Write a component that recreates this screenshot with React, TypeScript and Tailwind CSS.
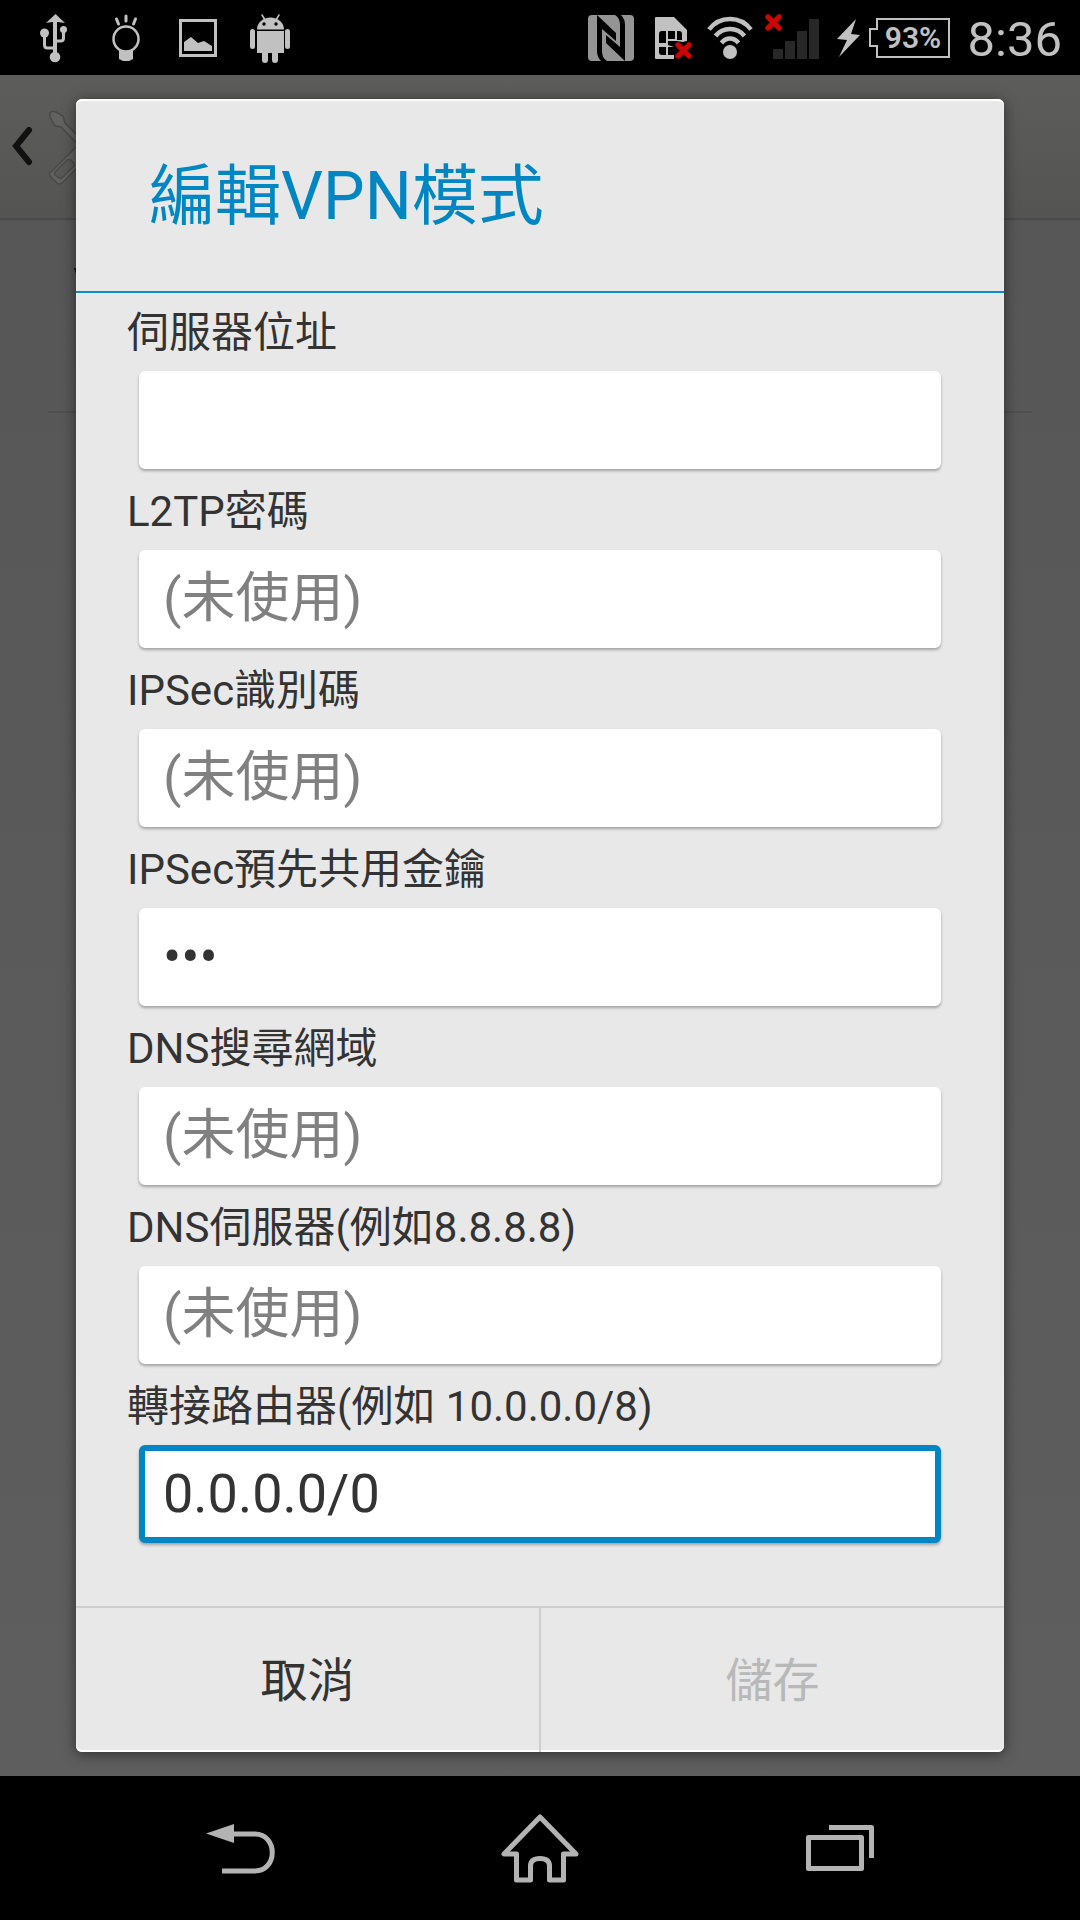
import React, { useState } from 'react';

interface Field {
  id: string;
  label: string;
  type?: 'text' | 'password';
  value: string;
  placeholder?: string;
}

const INITIAL_FIELDS: Field[] = [
  { id: 'server', label: '伺服器位址', value: '' },
  { id: 'l2tp-secret', label: 'L2TP密碼', value: '', placeholder: '(未使用)' },
  { id: 'ipsec-id', label: 'IPSec識別碼', value: '', placeholder: '(未使用)' },
  { id: 'ipsec-key', label: 'IPSec預先共用金鑰', type: 'password', value: 'abc' },
  { id: 'dns-domains', label: 'DNS搜尋網域', value: '', placeholder: '(未使用)' },
  { id: 'dns-servers', label: 'DNS伺服器(例如8.8.8.8)', value: '', placeholder: '(未使用)' },
  { id: 'routes', label: '轉接路由器(例如 10.0.0.0/8)', value: '0.0.0.0/0' },
];

// Small red cross used on the SIM and signal icons
function RedCross({ x, y }: { x: number; y: number }) {
  return (
    <g transform={`translate(${x} ${y})`} strokeLinecap="round">
      <path d="M3 3l11 11M14 3L3 14" stroke="#8e0000" strokeWidth="6" />
      <path d="M3 3l11 11M14 3L3 14" stroke="#cc0505" strokeWidth="4.500" />
    </g>
  );
}

function StatusBar() {
  return (
    <header className="flex h-[75px] shrink-0 items-center justify-between bg-black pr-[18px] pl-10 text-[#c1c1c1]">
      <div className="flex items-center">
        {/* USB */}
        <svg width="28" height="50" viewBox="0 0 28 50" fill="none" stroke="currentColor" strokeWidth="3">
          <path d="M15 6v37" strokeWidth="4" />
          <path d="M4.500 21v11q0 3 3 3H15M23.500 18v7q0 3-3 3H15" />
          <path d="M15.500 1L25 10l-7-1h-6l-6 1z" fill="currentColor" stroke="none" />
          <g fill="currentColor" stroke="none">
            <circle cx="4.500" cy="20" r="4.500" />
            <circle cx="23.500" cy="16.500" r="3.500" />
            <circle cx="15" cy="44" r="5.300" />
          </g>
        </svg>
        {/* Light bulb */}
        <svg className="ml-11" width="28" height="50" viewBox="0 0 28 50" fill="none" stroke="currentColor">
          <circle cx="14" cy="26" r="12.500" strokeWidth="2.500" />
          <path d="M7 36q7 4 14 0v10q-2 1-4 2h-6q-2-1-4-2z" fill="currentColor" stroke="none" />
          <path d="M14 3v5M4.500 6l2 5M23.500 6l-2 5" strokeWidth="3" strokeLinecap="round" />
        </svg>
        {/* Picture */}
        <svg className="ml-[39px]" width="38" height="50" viewBox="0 0 38 50">
          <rect x="1.500" y="7.500" width="35" height="35" fill="none" stroke="currentColor" strokeWidth="3" />
          <path d="M5 29l7-5 7 6 6-2 8 5v5H5z" fill="currentColor" />
        </svg>
        {/* Android robot */}
        <svg className="ml-[33px]" width="40" height="50" viewBox="0 0 40 50" fill="currentColor">
          <path d="M7 16.500a13.500 12 0 0127 0z" />
          <path d="M12 2l3 5M29 2l-3 5" stroke="currentColor" strokeWidth="1.500" strokeLinecap="round" />
          <path d="M7 18h27v22H7z" />
          <rect y="16" width="5" height="20" rx="2.500" />
          <rect x="35" y="16" width="5" height="20" rx="2.500" />
          <rect x="12" y="34" width="6" height="16" rx="3" />
          <rect x="22" y="34" width="6" height="16" rx="3" />
          <circle cx="14" cy="11" r="1.700" fill="#000" />
          <circle cx="26" cy="11" r="1.700" fill="#000" />
        </svg>
      </div>
      <div className="flex items-center">
        {/* NFC */}
        <svg width="46" height="46" viewBox="0 0 46 46">
          <rect width="46" height="46" rx="4" fill="#949494" />
          <path d="M9 0l19 18v8L14 14v22q0 7 5 10h-6q-4-4-4-10z" fill="#000" />
          <path d="M37 46L18 28v-8l14 12V10q0-7-5-10h6q4 4 4 10z" fill="#000" />
        </svg>
        {/* SIM with error */}
        <svg className="ml-[21px]" width="38" height="44" viewBox="0 0 38 44">
          <path d="M0 2q0-1 1-1h18l13 13v29H1q-1 0-1-1z" fill="currentColor" />
          <path d="M4 18q0-3 3-3h4v12H4zM13 15h7v8h-7zM22 15h2q3 0 3 3v6h-5zM4 31h7v8H7q-3 0-3-3zM13 31h6v8h-6z" fill="#000" />
          <path d="M13 25h9l6 1 7-2v20H19V31l-6-2z" fill="#000" />
          <RedCross x={20} y={26} />
        </svg>
        {/* Wi-Fi */}
        <svg className="ml-3.5" width="46" height="44" viewBox="0 0 46 44" fill="none" stroke="currentColor" strokeWidth="4.500">
          <path d="M2 13.500Q10 3 23 3t21 10.500M8.500 20Q14 13 23 13t14.500 7M14.500 27q3.500-4.500 8.500-4.500t8.500 4.500" />
          <circle cx="23" cy="36" r="7" fill="currentColor" stroke="none" />
        </svg>
        {/* Mobile signal, no service */}
        <svg className="ml-3" width="54" height="48" viewBox="0 0 54 48">
          <path d="M8 35h10v10H8zM20 27h10v18H20zM32 17h10v28H32zM44 5h10v40H44z" fill="#282828" />
          <RedCross x={0} y={0} />
        </svg>
        {/* Charging bolt */}
        <svg className="ml-[18px]" width="24" height="38" viewBox="0 0 24 38" fill="currentColor">
          <path d="M19 0L0 20l10 1L2 38l21-22-9-1z" />
        </svg>
        {/* Battery outline with its level on top */}
        <div className="relative ml-2 flex h-10 w-[81px] items-center justify-center pl-2">
          <svg className="absolute inset-0" width="81" height="40" viewBox="0 0 81 40" fill="none" stroke="currentColor" strokeWidth="2">
            <path d="M8 1h72v38H8V28H1V11h7z" />
          </svg>
          <span className="text-[30px] leading-8 font-semibold">93%</span>
        </div>
        <time className="ml-[18px] pt-1 text-[49px] leading-none">8:36</time>
      </div>
    </header>
  );
}

// Dimmed settings screen that stays behind the dialog
function SettingsBackdrop() {
  return (
    <div aria-hidden="true" className="absolute inset-0 bg-linear-to-b from-[#565656] to-[#5e5e5e]">
      <div className="flex h-[145px] items-center border-b-2 border-[#4a4a4a] bg-linear-to-b from-[#5d5d5b] to-[#545453] pl-3">
        <svg width="22" height="40" viewBox="0 0 22 40" fill="none" stroke="#111" strokeWidth="6" strokeLinecap="round">
          <path d="M17 3L4 19l13 16" />
        </svg>
        <svg className="ml-[14px]" width="76" height="76" viewBox="0 0 76 76" fill="#626261" stroke="#494949" strokeWidth="1.500">
          <path d="M2 4q2-3 6-1l7 4 2 7 50 50-5 5L13 18l-6-1-5-9z" />
          <path d="M2 64l54-54 12 10-54 54q-3 2-5 0l-7-7q-1-2 0-3z" />
          <path d="M7 63l12-12q2-1 4 0l3 3q1 2 0 3L14 69q-2 1-3 0l-4-3q-1-2 0-3z" fill="#585857" />
        </svg>
      </div>
      <div className="mx-12 flex h-[193px] flex-col justify-center border-b-2 border-[#4f4f4f] pl-[25px] text-[#111]">
        <span className="text-[54px] leading-[72px]">V</span>
        <span className="text-[42px] leading-[56px]">L</span>
      </div>
    </div>
  );
}

function NavigationBar() {
  return (
    <nav className="flex h-[144px] shrink-0 items-center justify-center gap-[224px] bg-black text-[#b3b3b3]">
      <button type="button" aria-label="返回">
        <svg width="70" height="70" viewBox="0 0 70 70" fill="none" stroke="currentColor" strokeWidth="6">
          <path d="M27 21h22C72 21 72 58 49 58H16" strokeWidth="5" />
          <path d="M0 20.500L28 11v19z" fill="currentColor" stroke="none" />
        </svg>
      </button>
      <button type="button" aria-label="主畫面">
        <svg width="80" height="70" viewBox="0 0 80 70" fill="none" stroke="currentColor" strokeWidth="5">
          <path d="M40 4L4 41h12.500v26h14V53q0-7.500 9.500-7.500t9.500 7.500v14h14V41H76z" strokeLinejoin="round" />
        </svg>
      </button>
      <button type="button" aria-label="最近使用">
        <svg width="70" height="70" viewBox="0 0 70 70" fill="none" stroke="currentColor" strokeWidth="5">
          <path d="M4.500 24.500h53v31h-53zM25 14.500h42.500V45" strokeLinejoin="round" />
        </svg>
      </button>
    </nav>
  );
}

export default function App() {
  const [fields, setFields] = useState<Field[]>(INITIAL_FIELDS);
  const [activeId, setActiveId] = useState('routes');

  const handleChange = (id: string, value: string) => {
    setFields(prev => prev.map(field => (field.id === id ? { ...field, value } : field)));
  };

  return (
    <div className="flex min-h-screen flex-col bg-black font-[Roboto,'Noto_Sans_CJK_TC',sans-serif]">
      <StatusBar />

      <main className="relative flex-1 px-[76px] py-6">
        <SettingsBackdrop />

        <form
          role="dialog"
          aria-labelledby="dialog-title"
          onSubmit={e => e.preventDefault()}
          className="relative overflow-hidden rounded-md bg-[#e8e8e8] text-[#333] shadow-[0_2px_14px_rgba(0,0,0,0.5),inset_0_2px_1px_#fff,inset_0_-2px_1px_#fff]"
        >
          <h1
            id="dialog-title"
            className="flex h-[194px] items-center border-b-2 border-[#0a8fc4] px-[73px] pt-1 text-[66px] leading-none text-[#0086c3]"
          >
            編輯VPN模式
          </h1>

          {/* Fields */}
          <div className="pr-[63px] pb-[60px] pl-[51px]">
            {fields.map(field => (
              <div key={field.id} className="mb-[3px]">
                <label htmlFor={field.id} className="flex h-[78px] items-center pt-[2px] text-[42px] leading-none">
                  {field.label}
                </label>
                <div className="pl-3">
                  <input
                    id={field.id}
                    type={field.type ?? 'text'}
                    value={field.value}
                    placeholder={field.placeholder}
                    autoComplete="off"
                    onFocus={() => setActiveId(field.id)}
                    onChange={e => handleChange(field.id, e.target.value)}
                    className={`block h-[98px] w-full rounded-md border-[6px] bg-white px-[18px] pb-[2px] text-[54px] leading-none shadow-[0_2px_3px_rgba(0,0,0,0.3)] outline-none placeholder:text-[#808080] placeholder:opacity-100 ${
                      activeId === field.id ? 'border-[#0086c3]' : 'border-white'
                    }`}
                  />
                </div>
              </div>
            ))}
          </div>

          {/* Actions */}
          <div className="flex h-[146px] border-t-2 border-[#cfcfcf] text-[47px]">
            <button type="button" className="flex-1 border-r-2 border-[#cfcfcf] pt-[2px]">
              取消
            </button>
            <button type="submit" disabled className="flex-1 pt-[2px] text-[#b8b8b8]">
              儲存
            </button>
          </div>
        </form>
      </main>

      <NavigationBar />
    </div>
  );
}
